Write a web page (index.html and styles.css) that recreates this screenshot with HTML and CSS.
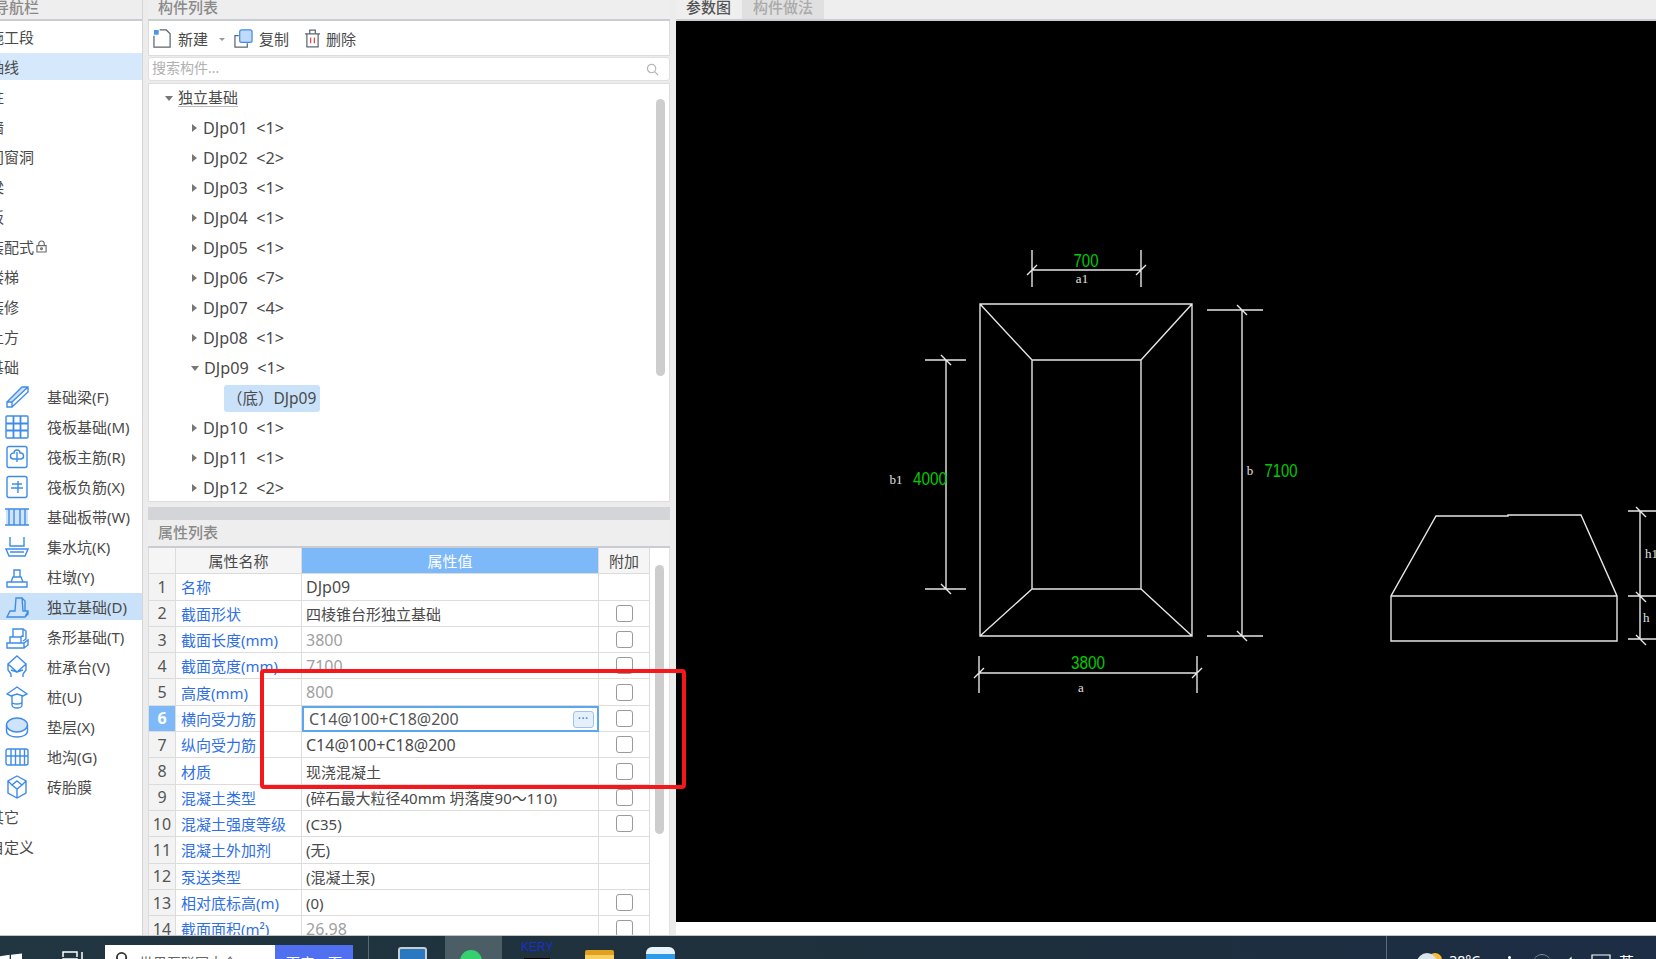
FILE: index.html
```html
<!DOCTYPE html>
<html lang="zh-CN">
<head>
    <meta charset="UTF-8">
    <title>构件列表</title>
    <link rel="stylesheet" href="styles.css">
</head>
<body>
<div class="screen">
    <div class="main">
        <!-- left navigation -->
        <div class="nav">
            <div class="panel-title nav-title">导航栏</div>
            <div class="nav-list">
                <div class="nav-group">施工段</div>
                <div class="nav-group active">轴线</div>
                <div class="nav-group">柱</div>
                <div class="nav-group">墙</div>
                <div class="nav-group">门窗洞</div>
                <div class="nav-group">梁</div>
                <div class="nav-group">板</div>
                <div class="nav-group">装配式
                    <svg class="lock" viewBox="0 0 12 14"><path d="M3 6V4a3 3 0 0 1 6 0v2M1 6h10v7H1z"/><circle cx="6" cy="9.5" r="1"/></svg>
                </div>
                <div class="nav-group">楼梯</div>
                <div class="nav-group">装修</div>
                <div class="nav-group">土方</div>
                <div class="nav-group">基础</div>
                <div class="nav-item">
                    <svg class="ico" viewBox="0 0 24 24"><path class="soft" d="M2 17L17 2h6L7 17z"/><path d="M2 17h5v5H2zM2 17L17 2h6v5L7 22M7 17L23 2"/></svg>基础梁(F)
                </div>
                <div class="nav-item">
                    <svg class="ico" viewBox="0 0 24 24"><rect x="1" y="1" width="22" height="22" rx="1"/><path class="thick" d="M1 8.500h22M1 15.500h22M8.500 1v22M15.500 1v22"/></svg>筏板基础(M)
                </div>
                <div class="nav-item">
                    <svg class="ico" viewBox="0 0 24 24"><rect x="2" y="1.500" width="20" height="21" rx="2"/><path d="M12 7v10M8 14a3 3 0 0 1 1-6 3 3 0 0 1 6 0 3 3 0 0 1 1 6z"/></svg>筏板主筋(R)
                </div>
                <div class="nav-item">
                    <svg class="ico" viewBox="0 0 24 24"><rect x="2" y="1.500" width="20" height="21" rx="2"/><path d="M7 9h10M6 13h12M13 6v12"/></svg>筏板负筋(X)
                </div>
                <div class="nav-item">
                    <svg class="ico" viewBox="0 0 24 24"><path class="soft" d="M1 4h22v16H1z"/><path d="M0 4h24M0 20h24M4 4v16M20 4v16M9 4v16M15 4v16"/></svg>基础板带(W)
                </div>
                <div class="nav-item">
                    <svg class="ico" viewBox="0 0 24 24"><path d="M5 2v9h14V2M1 14h22l-3 7H4zM5 17h14"/></svg>集水坑(K)
                </div>
                <div class="nav-item">
                    <svg class="ico" viewBox="0 0 24 24"><path d="M2 17h20v5H2zM6 17l2-5h8l2 5M9 12V5h6v7"/></svg>柱墩(Y)
                </div>
                <div class="nav-item selected">
                    <svg class="ico" viewBox="0 0 24 24"><path class="soft" d="M2 22l3-6h18v3l-3 3z"/><path d="M2 22l3-6h5l1-13h6l1 13h5v3l-3 3zM2 22h18l3-6M17 3l3 3v10"/></svg>独立基础(D)
                </div>
                <div class="nav-item">
                    <svg class="ico" viewBox="0 0 24 24"><path d="M2 18h17v5H2zM5 18v-6h11v6M8 12V4h10v8M19 23l4-3v-5l-4 3M16 12l2-2M18 4l3 2v8l-3 2"/></svg>条形基础(T)
                </div>
                <div class="nav-item">
                    <svg class="ico" viewBox="0 0 24 24"><path d="M12 1l9 8-9 8-9-8zM3 9v6l3 4M21 9v6l-3 4M12 17l-6-2M12 17l6-2M6 19v3M18 19v3"/></svg>桩承台(V)
                </div>
                <div class="nav-item">
                    <svg class="ico" viewBox="0 0 24 24"><path d="M2 9l10-7 10 7-4 2-6-2-6 2zM7 11v9a5 3 0 0 0 10 0v-9M7 17a5 2 0 0 0 10 0"/></svg>桩(U)
                </div>
                <div class="nav-item">
                    <svg class="ico" viewBox="0 0 24 24"><ellipse class="soft" cx="12" cy="10" rx="10.500" ry="7"/><ellipse cx="12" cy="10" rx="10.500" ry="7"/><path d="M1.500 10v6c0 4 5 6 10.500 6s10.500-2 10.500-6v-6"/></svg>垫层(X)
                </div>
                <div class="nav-item">
                    <svg class="ico" viewBox="0 0 24 24"><rect x="1" y="4" width="22" height="16" rx="2"/><path d="M1 11h22M6 4v16M10.500 4v16M15 4v16M19.500 4v16"/></svg>地沟(G)
                </div>
                <div class="nav-item">
                    <svg class="ico" viewBox="0 0 24 24"><path d="M12 1l9 5v12l-9 5-9-5V6zM12 6l5 4-5 4-5-4zM3 6l4 4M21 6l-4 4M12 14v9"/></svg>砖胎膜
                </div>
                <div class="nav-group">其它</div>
                <div class="nav-group">自定义</div>
            </div>
        </div>

        <!-- component list and properties -->
        <div class="mid">
            <div class="panel-title">构件列表</div>
            <div class="toolbar">
                <svg class="tool-ico new-ico" viewBox="0 0 20 20"><path d="M1 7v12h17V5l-4-4H7"/><path class="star" d="M1 1h5v5H1z"/></svg>
                <span class="tool-text">新建</span>
                <span class="caret"></span>
                <svg class="tool-ico copy-ico" viewBox="0 0 20 20"><path d="M5 7H1v12h13v-4"/><rect class="fill" x="6" y="1" width="13" height="13" rx="2"/></svg>
                <span class="tool-text">复制</span>
                <svg class="tool-ico del-ico" viewBox="0 0 16 20"><path d="M2 5h12v14H2zM0 5h16M5 5V1h6v4"/><path class="red" d="M6 9v6M10 9v6"/></svg>
                <span class="tool-text">删除</span>
            </div>
            <div class="search">
                <span class="search-text">搜索构件...</span>
                <svg class="search-ico" viewBox="0 0 14 14"><circle cx="6" cy="6" r="4.500"/><path d="M9.500 9.500L13 13"/></svg>
            </div>
            <div class="tree">
                <div class="tree-bar"></div>
                <div class="tree-row level-1"><span class="arrow open"></span><span class="underline">独立基础</span></div>
                <div class="tree-row level-2"><span class="arrow"></span>DJp01&nbsp; &lt;1&gt;</div>
                <div class="tree-row level-2"><span class="arrow"></span>DJp02&nbsp; &lt;2&gt;</div>
                <div class="tree-row level-2"><span class="arrow"></span>DJp03&nbsp; &lt;1&gt;</div>
                <div class="tree-row level-2"><span class="arrow"></span>DJp04&nbsp; &lt;1&gt;</div>
                <div class="tree-row level-2"><span class="arrow"></span>DJp05&nbsp; &lt;1&gt;</div>
                <div class="tree-row level-2"><span class="arrow"></span>DJp06&nbsp; &lt;7&gt;</div>
                <div class="tree-row level-2"><span class="arrow"></span>DJp07&nbsp; &lt;4&gt;</div>
                <div class="tree-row level-2"><span class="arrow"></span>DJp08&nbsp; &lt;1&gt;</div>
                <div class="tree-row level-2"><span class="arrow open"></span>DJp09&nbsp; &lt;1&gt;</div>
                <div class="tree-row level-3"><span class="pill">（底）DJp09</span></div>
                <div class="tree-row level-2"><span class="arrow"></span>DJp10&nbsp; &lt;1&gt;</div>
                <div class="tree-row level-2"><span class="arrow"></span>DJp11&nbsp; &lt;1&gt;</div>
                <div class="tree-row level-2"><span class="arrow"></span>DJp12&nbsp; &lt;2&gt;</div>
            </div>
            <div class="splitter"></div>
            <div class="panel-title prop-title">属性列表</div>
            <div class="props">
                <div class="props-bar"></div>
                <div class="prop-row head">
                    <div class="cell idx"></div><div class="cell name">属性名称</div><div class="cell val">属性值</div><div class="cell add">附加</div>
                </div>
                <div class="prop-row">
                    <div class="cell idx">1</div><div class="cell name">名称</div><div class="cell val lat">DJp09</div><div class="cell add"></div>
                </div>
                <div class="prop-row">
                    <div class="cell idx">2</div><div class="cell name">截面形状</div><div class="cell val">四棱锥台形独立基础</div><div class="cell add"><span class="check"></span></div>
                </div>
                <div class="prop-row">
                    <div class="cell idx">3</div><div class="cell name">截面长度(mm)</div><div class="cell val lat muted">3800</div><div class="cell add"><span class="check"></span></div>
                </div>
                <div class="prop-row">
                    <div class="cell idx">4</div><div class="cell name">截面宽度(mm)</div><div class="cell val lat muted">7100</div><div class="cell add"><span class="check"></span></div>
                </div>
                <div class="prop-row">
                    <div class="cell idx">5</div><div class="cell name">高度(mm)</div><div class="cell val lat muted">800</div><div class="cell add"><span class="check"></span></div>
                </div>
                <div class="prop-row current">
                    <div class="cell idx">6</div><div class="cell name">横向受力筋</div>
                    <div class="cell val lat editing">C14@100+C18@200<span class="more">•••</span></div>
                    <div class="cell add"><span class="check"></span></div>
                </div>
                <div class="prop-row">
                    <div class="cell idx">7</div><div class="cell name">纵向受力筋</div><div class="cell val lat">C14@100+C18@200</div><div class="cell add"><span class="check"></span></div>
                </div>
                <div class="prop-row">
                    <div class="cell idx">8</div><div class="cell name">材质</div><div class="cell val">现浇混凝土</div><div class="cell add"><span class="check"></span></div>
                </div>
                <div class="prop-row">
                    <div class="cell idx">9</div><div class="cell name">混凝土类型</div><div class="cell val">(碎石最大粒径40mm 坍落度90～110)</div><div class="cell add"><span class="check"></span></div>
                </div>
                <div class="prop-row">
                    <div class="cell idx">10</div><div class="cell name">混凝土强度等级</div><div class="cell val">(C35)</div><div class="cell add"><span class="check"></span></div>
                </div>
                <div class="prop-row">
                    <div class="cell idx">11</div><div class="cell name">混凝土外加剂</div><div class="cell val">(无)</div><div class="cell add"></div>
                </div>
                <div class="prop-row">
                    <div class="cell idx">12</div><div class="cell name">泵送类型</div><div class="cell val">(混凝土泵)</div><div class="cell add"></div>
                </div>
                <div class="prop-row">
                    <div class="cell idx">13</div><div class="cell name">相对底标高(m)</div><div class="cell val">(0)</div><div class="cell add"><span class="check"></span></div>
                </div>
                <div class="prop-row">
                    <div class="cell idx">14</div><div class="cell name">截面面积(m²)</div><div class="cell val lat muted">26.98</div><div class="cell add"><span class="check"></span></div>
                </div>
            </div>
        </div>

        <!-- parameter drawing -->
        <div class="right">
            <div class="tabs">
                <div class="tab on">参数图</div>
                <div class="tab">构件做法</div>
            </div>
            <div class="canvas">
                <svg class="drawing" viewBox="676 21 980 901">
                    <path d="M980 304H1192V636H980ZM1032 360H1141V589H1032ZM980 304L1032 360M1192 304L1141 360M980 636L1032 589M1192 636L1141 589"/>
                    <path d="M1032 250V287M1141 250V287M1032 270H1141M1027 275L1037 265M1136 275L1146 265"/>
                    <path d="M925 360H966M925 589H966M946 360V589M941 355L951 365M941 584L951 594"/>
                    <path d="M1207 310H1263M1207 636H1263M1242 310V636M1237 305L1247 315M1237 631L1247 641"/>
                    <path d="M979 656V693M1197 656V693M979 673H1197M974 678L984 668M1192 678L1202 668"/>
                    <path d="M1436 516H1508V515H1581L1617 596V641H1391V596ZM1391 596H1617"/>
                    <path d="M1628 511H1656M1628 596H1656M1628 639H1656M1640 511V639M1636 507L1646 517M1636 592L1646 602M1636 635L1646 645"/>
                    <text class="num" x="1086" y="267" text-anchor="middle" textLength="25" lengthAdjust="spacingAndGlyphs">700</text>
                    <text class="num" x="930" y="485" text-anchor="middle" textLength="34" lengthAdjust="spacingAndGlyphs">4000</text>
                    <text class="num" x="1281" y="477" text-anchor="middle" textLength="33" lengthAdjust="spacingAndGlyphs">7100</text>
                    <text class="num" x="1088" y="669" text-anchor="middle" textLength="34" lengthAdjust="spacingAndGlyphs">3800</text>
                    <text class="lbl" x="1082" y="283" text-anchor="middle">a1</text>
                    <text class="lbl" x="896" y="484" text-anchor="middle">b1</text>
                    <text class="lbl" x="1250" y="475" text-anchor="middle">b</text>
                    <text class="lbl" x="1081" y="692" text-anchor="middle">a</text>
                    <text class="lbl" x="1645" y="558">h1</text>
                    <text class="lbl" x="1643" y="622">h</text>
                </svg>
            </div>
        </div>
    </div>

    <!-- windows taskbar, cut off by the bottom of the screenshot -->
    <div class="taskbar">
        <svg class="win" viewBox="0 0 16 16"><path d="M0 3l7-1v6H0zM8 2l8-1v7H8zM0 9h7v6l-7-1zM8 9h8v7l-8-1z"/></svg>
        <svg class="taskview" viewBox="0 0 22 16"><path d="M1 6V1h14v5M1 8h14v8H1zM20 1v15"/></svg>
        <div class="web-search">
            <svg class="web-ico" viewBox="0 0 14 14"><circle cx="6" cy="6" r="5"/></svg>
            <span>世界互联网大会</span>
        </div>
        <div class="web-btn">百度一下</div>
        <div class="task-sep"></div>
        <div class="app app-blue"></div>
        <div class="app-active"><span class="app-wechat"></span></div>
        <div class="app-kery"><span>KERY</span><i></i></div>
        <div class="app app-folder"></div>
        <div class="app app-sky"></div>
        <div class="tray">
            <div class="task-sep"></div>
            <span class="weather"></span>
            <span class="temp">38°C</span>
            <span class="tray-dot"></span>
            <span class="tray-arc"></span>
            <svg class="tray-spk" viewBox="0 0 20 16"><path d="M1 10h4l5-5v11M14 6v8"/></svg>
            <svg class="tray-box" viewBox="0 0 20 16"><path d="M1 16V2h18v14"/></svg>
            <span class="tray-ime">英</span>
        </div>
    </div>

    <div class="red-mark"></div>
</div>
</body>
</html>
```
FILE: styles.css
```css
html, body {
    margin: 0;
    padding: 0;
    overflow: hidden;
}
body {
    background-color: #ececec;
    color: #4a4a4a;
    font-family: "Noto Sans", "Noto Sans CJK SC", sans-serif;
    font-size: 15px;
}
.screen {
    position: relative;
    display: flex;
    flex-direction: column;
    width: 1656px;
    height: 959px;
    overflow: hidden;
}
.main {
    display: flex;
    height: 936px;
    border-bottom: 1px solid #c4c4c4;
    box-sizing: border-box;
    background-color: #ececec;
}

/* shared panel title, the top is cut off by the screenshot */
.panel-title {
    height: 19px;
    line-height: 14px;
    border-bottom: 2px solid #c9cdd2;
    padding-left: 10px;
    color: #8a8a8a;
    font-weight: 500;
    background-color: #eeeeee;
    overflow: hidden;
}

/* left nav */
.nav {
    width: 142px;
    flex: none;
    background-color: #fff;
    border-right: 1px solid #d5d5d5;
}
.nav-title {
    padding-left: 0;
    text-indent: -6px;
}
.nav-list {
    padding-top: 2px;
}
.nav-group, .nav-item {
    display: flex;
    align-items: center;
    height: 27px;
    margin-bottom: 3px;
    white-space: nowrap;
}
.nav-group {
    padding-left: 0;
    text-indent: -11px;
}
.nav-group.active {
    background-color: #d6e9fc;
}
.nav-item {
    padding-left: 5px;
}
.nav-item.selected {
    background-color: #c9e1f9;
}
.ico {
    width: 24px;
    height: 24px;
    margin-right: 18px;
    flex: none;
    fill: none;
    stroke: #3f8ce8;
    stroke-width: 1.4;
}
.ico .soft {
    fill: #cfe3fa;
    stroke: none;
}
.ico .thick {
    stroke-width: 1.8;
}
.lock {
    width: 11px;
    height: 13px;
    margin-left: 2px;
    fill: none;
    stroke: #666;
    stroke-width: 1.2;
}

/* middle column */
.mid {
    width: 522px;
    flex: none;
    margin-left: 5px;
    display: flex;
    flex-direction: column;
}
.toolbar {
    display: flex;
    align-items: center;
    height: 35px;
    box-sizing: border-box;
    padding-left: 4px;
    background-color: #fff;
    border: 1px solid #dcdcdc;
    border-top: none;
}
.tool-ico {
    height: 19px;
    width: 19px;
    flex: none;
    fill: none;
    stroke: #5c6670;
    stroke-width: 1.3;
}
.tool-text {
    margin-left: 6px;
}
.new-ico .star {
    fill: #4d94ee;
    stroke: none;
}
.caret {
    width: 0;
    height: 0;
    margin: 2px 9px 0 11px;
    border-left: 3px solid transparent;
    border-right: 3px solid transparent;
    border-top: 3px solid #999;
}
.copy-ico .fill {
    fill: #bfdafa;
    stroke: #3f8ce8;
}
.del-ico {
    width: 15px;
    margin-left: 16px;
}
.del-ico .red {
    stroke: #e64545;
}
.search {
    display: flex;
    align-items: center;
    justify-content: space-between;
    height: 24px;
    box-sizing: border-box;
    margin-top: 1px;
    padding: 0 10px 0 3px;
    color: #b0b0b0;
    font-size: 14px;
    background-color: #fff;
    border: 1px solid #e0e0e0;
    border-radius: 3px;
}
.search-text {
    line-height: 20px;
    margin-top: -2px;
}
.search-ico {
    width: 13px;
    height: 13px;
    fill: none;
    stroke: #b5b5b5;
    stroke-width: 1.3;
}
.tree {
    position: relative;
    height: 419px;
    margin-top: 2px;
    box-sizing: border-box;
    overflow: hidden;
    background-color: #fff;
    border: 1px solid #dedede;
}
.tree-bar {
    position: absolute;
    left: 507px;
    top: 15px;
    width: 9px;
    height: 277px;
    border-radius: 5px;
    background-color: #cdcdcd;
}
.tree-row {
    display: flex;
    align-items: center;
    height: 30px;
    white-space: nowrap;
}
.level-1 {
    margin-top: -1px;
    padding-left: 17px;
}
.level-2 {
    padding-left: 43px;
    font-size: 16.2px;
}
.level-3 {
    padding-left: 75px;
}
.arrow {
    width: 0;
    height: 0;
    margin-right: 6px;
    border-top: 4px solid transparent;
    border-bottom: 4px solid transparent;
    border-left: 5px solid #777;
}
.arrow.open {
    margin-left: -1px;
    margin-right: 5px;
    border-left: 4px solid transparent;
    border-right: 4px solid transparent;
    border-top: 5px solid #777;
    border-bottom: none;
}
.underline {
    border-bottom: 1px solid #bbb;
    line-height: 17px;
}
.pill {
    display: block;
    height: 27px;
    line-height: 27px;
    padding: 0 4px 0 3px;
    font-size: 15.5px;
    border-radius: 3px;
    background-color: #c9e1f9;
}
.splitter {
    height: 13px;
    margin-top: 5px;
    background-color: #d3d5d9;
}
.prop-title {
    height: 26px;
    line-height: 24px;
    padding-left: 10px;
}
.props {
    position: relative;
    flex: 1;
    min-height: 0;
    overflow: hidden;
    background-color: #fff;
    border-right: 1px solid #e2e2e2;
}
.props-bar {
    position: absolute;
    left: 507px;
    top: 17px;
    width: 9px;
    height: 269px;
    border-radius: 5px;
    background-color: #cdcdcd;
}
.prop-row {
    display: grid;
    grid-template-columns: 28px 126px 297px 51px;
    height: 26.3px;
}
.cell {
    display: flex;
    align-items: center;
    box-sizing: border-box;
    padding-left: 4px;
    white-space: nowrap;
    overflow: hidden;
    border-right: 1px solid #dcdcdc;
    border-bottom: 1px solid #dcdcdc;
}
.idx {
    justify-content: center;
    padding-left: 0;
    font-size: 16px;
    background-color: #f3f3f3;
    border-left: 1px solid #dcdcdc;
    color: #555;
}
.name {
    padding-left: 5px;
    color: #2f6fe6;
}
.val {
    color: #4a4a4a;
}
.lat {
    font-size: 16px;
}
.add {
    justify-content: center;
    padding-left: 0;
}
.muted {
    color: #a0a0a0;
}
.head .cell {
    justify-content: center;
    padding-left: 0;
    background-color: #f5f5f5;
    color: #4a4a4a;
}
.head .val {
    background-color: #7db9f8;
    color: #fff;
}
.current .idx {
    background-color: #7db9f8;
    color: #fff;
    font-weight: 700;
}
.editing {
    position: relative;
    padding-left: 5px;
    border: 2px solid #5aa6ef;
    color: #555;
}
.more {
    position: absolute;
    right: 3px;
    top: 3px;
    width: 19px;
    height: 15px;
    line-height: 14px;
    font-size: 7px;
    text-align: center;
    letter-spacing: 1px;
    color: #3f8ce8;
    background-color: #e6f0fb;
    border: 1px solid #9cc4ef;
    border-radius: 3px;
}
.check {
    width: 17px;
    height: 17px;
    box-sizing: border-box;
    border: 1.5px solid #9a9a9a;
    border-radius: 3px;
    background-color: #fff;
}

/* drawing side */
.right {
    flex: 1;
    margin-left: 6px;
    display: flex;
    flex-direction: column;
    background-color: #fff;
}
.tabs {
    display: flex;
    height: 19px;
    line-height: 14px;
    border-bottom: 2px solid #c9cdd2;
    background-color: #eeeeee;
    overflow: hidden;
}
.tab {
    padding: 0 11px;
    color: #aaa;
    font-weight: 500;
    background-color: #e0e0e0;
    height: 19px;
}
.tab.on {
    width: 45px;
    margin-right: 1px;
    padding: 0 10px;
    color: #555;
    background-color: #efefef;
    white-space: nowrap;
}
.canvas {
    height: 901px;
    background-color: #000;
}
.drawing {
    display: block;
    width: 980px;
    height: 901px;
    fill: none;
    stroke: #e6e6e6;
    stroke-width: 1.4;
}
.drawing text {
    stroke: none;
}
.drawing .num {
    fill: #00cc00;
    font-family: "Liberation Sans", sans-serif;
    font-size: 18px;
}
.drawing .lbl {
    fill: #e0e0e0;
    font-family: "Liberation Serif", serif;
    font-size: 13px;
}

/* taskbar */
.taskbar {
    position: relative;
    display: flex;
    flex: 1;
    background: linear-gradient(90deg, #213640, #1d2f3c 60%, #1c2d45);
    overflow: hidden;
    color: #fff;
}
.win {
    width: 22px;
    height: 22px;
    margin: 16px 0 0 0;
    flex: none;
    fill: #fff;
}
.taskview {
    width: 22px;
    height: 16px;
    margin: 15px 0 0 40px;
    flex: none;
    fill: none;
    stroke: #fff;
    stroke-width: 1.5;
}
.web-search {
    display: flex;
    width: 170px;
    height: 30px;
    margin: 9px 0 0 21px;
    flex: none;
    padding-left: 11px;
    box-sizing: border-box;
    background-color: #fff;
    color: #666;
    font-size: 14px;
    line-height: 36px;
}
.web-ico {
    width: 13px;
    height: 13px;
    margin: 7px 10px 0 0;
    fill: none;
    stroke: #333;
    stroke-width: 2;
}
.web-btn {
    width: 78px;
    height: 30px;
    margin-top: 9px;
    flex: none;
    text-align: center;
    font-size: 14px;
    line-height: 36px;
    background-color: #5070f0;
}
.task-sep {
    width: 1px;
    height: 23px;
    margin: 0 0 0 15px;
    flex: none;
    background-color: #5a6a72;
}
.app {
    width: 29px;
    height: 30px;
    margin-top: 11px;
    flex: none;
    border-radius: 3px;
}
.app-blue {
    margin-left: 29px;
    background-color: #2a78c0;
    border: 2px solid #c5ccd2;
    box-sizing: border-box;
}
.app-active {
    width: 57px;
    margin-left: 18px;
    flex: none;
    background-color: #4b5e66;
}
.app-wechat {
    display: block;
    width: 22px;
    height: 22px;
    margin: 14px 0 0 15px;
    border-radius: 50%;
    background-color: #35d070;
}
.app-kery {
    width: 30px;
    margin-left: 19px;
    flex: none;
    color: #1a2fd0;
    font-family: "Liberation Sans", sans-serif;
    font-size: 12px;
    line-height: 12px;
    padding-top: 5px;
}
.app-kery span {
    display: block;
    height: 17px;
}
.app-kery i {
    display: block;
    width: 26px;
    height: 8px;
    margin-left: 3px;
    background-color: #000;
}
.app-folder {
    margin: 14px 0 0 34px;
    border-radius: 2px 2px 0 0;
    background: linear-gradient(180deg, #e0a020 0 5px, #f7cf62 5px);
}
.app-sky {
    margin-left: 32px;
    background: linear-gradient(180deg, #e8f4fc 0 7px, #2f9ae8 7px 12px, #e8f4fc 12px);
    border-radius: 6px;
}
.tray {
    display: flex;
    margin-left: auto;
}
.tray .task-sep {
    background-color: #5c6a76;
}
.weather {
    width: 20px;
    height: 20px;
    margin: 17px 0 0 30px;
    border-radius: 50%;
    background-color: #dbe4ea;
    box-shadow: 8px -3px 0 -3px #f4bd3a;
}
.temp {
    margin: 17px 0 0 12px;
    font-size: 14px;
    line-height: 16px;
}
.tray-dot {
    width: 3px;
    height: 3px;
    margin: 20px 0 0 28px;
    border-radius: 50%;
    background-color: #fff;
}
.tray-arc {
    width: 18px;
    height: 18px;
    margin: 18px 0 0 22px;
    border-radius: 50%;
    border-top: 1px solid #8a969e;
}
.tray-spk, .tray-box {
    width: 20px;
    height: 16px;
    margin: 17px 0 0 10px;
    fill: none;
    stroke: #fff;
    stroke-width: 1.2;
}
.tray-ime {
    margin: 17px 22px 0 8px;
    font-size: 15px;
    line-height: 18px;
}

/* annotation drawn on top of the screenshot */
.red-mark {
    position: absolute;
    left: 260px;
    top: 669px;
    width: 426px;
    height: 120px;
    box-sizing: border-box;
    border: 4px solid #f5171a;
    border-radius: 4px;
}
```
